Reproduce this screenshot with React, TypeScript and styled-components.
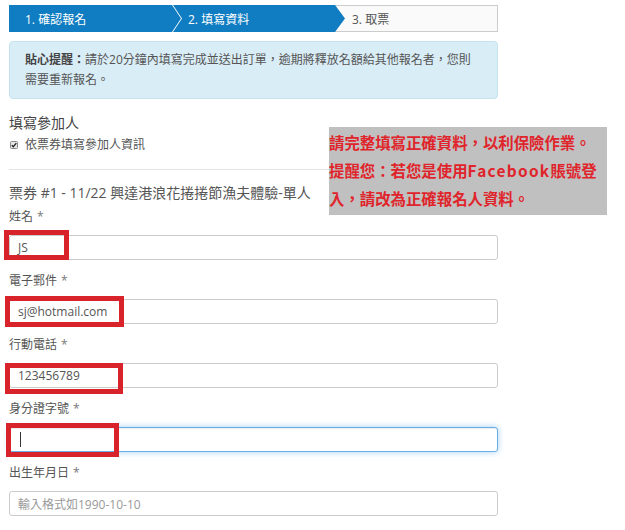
import React from "react";
import styled, { createGlobalStyle, css } from "styled-components";

const GlobalStyle = createGlobalStyle`
  html, body { margin: 0; padding: 0; background: #fff; }
  body {
    font-family: "Open Sans", "Noto Sans CJK TC", sans-serif;
    color: #555;
  }
`;

const Page = styled.div`
  position: relative;
  width: 625px;
  height: 530px;
  overflow: hidden;
  box-sizing: border-box;
  padding: 5px 0 0 9px;
`;

const Form = styled.div`
  width: 489px;
  display: flex;
  flex-direction: column;
`;

const Stepper = styled.div`
  display: flex;
  height: 27px;
`;

type StepKind = "first" | "middle" | "last";

const Step = styled.div<{ $kind: StepKind }>`
  display: flex;
  align-items: center;
  box-sizing: border-box;
  font-size: 12px;
  white-space: nowrap;
  ${({ $kind }) =>
    $kind === "first" &&
    css`
      flex: 0 0 172px;
      padding-left: 16px;
      background: #107dc2;
      color: #fff;
      clip-path: polygon(0 0, calc(100% - 9px) 0, 100% 50%, calc(100% - 9px) 100%, 0 100%);
    `}
  ${({ $kind }) =>
    $kind === "middle" &&
    css`
      flex: 0 0 172px;
      margin-left: -8px;
      padding-left: 15px;
      background: #107dc2;
      color: #fff;
      position: relative;
      z-index: 1;
      clip-path: polygon(0 0, calc(100% - 10px) 0, 100% 50%, calc(100% - 10px) 100%, 0 100%, 9px 50%);
    `}
  ${({ $kind }) =>
    $kind === "last" &&
    css`
      flex: 1;
      margin-left: -10px;
      padding-left: 17px;
      background: #fafafa;
      color: #555;
      border: 1px solid #ccc;
      border-left: none;
    `}
`;

const Alert = styled.div`
  margin-top: 9px;
  background: #d9edf7;
  border: 1px solid #c4e3ef;
  border-radius: 4px;
  padding: 8px 15px;
  font-size: 12px;
  line-height: 20px;
  color: #555;
  white-space: nowrap;
`;

const Strong = styled.strong`
  font-weight: 700;
  color: #444;
`;

const SectionHeading = styled.div`
  margin-top: 14px;
  font-size: 14px;
  line-height: 20px;
  color: #444;
`;

const CheckRow = styled.div`
  margin-top: 2px;
  display: flex;
  align-items: center;
  gap: 7px;
  padding-left: 1px;
  font-size: 12px;
  line-height: 20px;
  color: #555;
`;

const CheckIcon = styled.svg`
  width: 8px;
  height: 8px;
  flex: none;
`;

const Divider = styled.hr`
  margin: 14px 0 0;
  border: none;
  height: 1px;
  background: #e5e5e5;
`;

const TicketTitle = styled.div`
  margin-top: 12px;
  font-size: 14px;
  line-height: 22px;
  color: #555;
  white-space: nowrap;
`;

const FieldList = styled.div`
  margin-top: 3px;
  display: flex;
  flex-direction: column;
  gap: 11px;
`;

const FieldGroup = styled.div`
  display: flex;
  flex-direction: column;
`;

const Label = styled.div`
  font-size: 12px;
  line-height: 20px;
  margin-bottom: 8px;
  color: #555;
`;

const Required = styled.span`
  color: #777;
  margin-left: 4px;
`;

const InputWrap = styled.div`
  position: relative;
`;

const InputBox = styled.div<{ $focused?: boolean; $placeholder?: boolean }>`
  height: 25px;
  box-sizing: border-box;
  border: 1px solid ${({ $focused }) => ($focused ? "#66afe9" : "#ccc")};
  border-radius: 3px;
  padding: 0 8px;
  display: flex;
  align-items: center;
  font-size: 12px;
  color: ${({ $placeholder }) => ($placeholder ? "#999" : "#555")};
  background: #fff;
  ${({ $focused }) =>
    $focused &&
    css`
      box-shadow: inset 0 1px 1px rgba(0, 0, 0, 0.075), 0 0 6px rgba(102, 175, 233, 0.6);
    `}
`;

const Caret = styled.span`
  display: inline-block;
  width: 1px;
  height: 15px;
  margin-left: 2px;
  background: #333;
`;

const RedMark = styled.div<{ $x: number; $y: number; $w: number; $h: number }>`
  position: absolute;
  left: ${({ $x }) => $x}px;
  top: ${({ $y }) => $y}px;
  width: ${({ $w }) => $w}px;
  height: ${({ $h }) => $h}px;
  box-sizing: border-box;
  border: 5px solid #d8232a;
  pointer-events: none;
`;

const Note = styled.div`
  position: absolute;
  left: 329px;
  top: 127px;
  width: 278px;
  height: 88px;
  box-sizing: border-box;
  padding-top: 1px;
  background: #c0c0c0;
  color: #e0242b;
  font-family: "Noto Sans CJK TC", "Open Sans", sans-serif;
  font-weight: 700;
  font-size: 15.4px;
  line-height: 28px;
  white-space: nowrap;
`;

const NoteLatin = styled.span`
  letter-spacing: 1.3px;
`;

type Field = {
  label: string;
  value?: string;
  placeholder?: string;
  focused?: boolean;
  mark?: { x: number; y: number; w: number; h: number };
};

const fields: Field[] = [
  { label: "姓名", value: "JS", mark: { x: -5, y: -5, w: 65, h: 30 } },
  { label: "電子郵件", value: "sj@hotmail.com", mark: { x: -4, y: -3, w: 119, h: 31 } },
  { label: "行動電話", value: "123456789", mark: { x: -4, y: 0, w: 118, h: 31 } },
  { label: "身分證字號", focused: true, mark: { x: -3, y: -4, w: 113, h: 34 } },
  { label: "出生年月日", placeholder: "輸入格式如1990-10-10" },
];

export default function App() {
  return (
    <>
      <GlobalStyle />
      <Page>
        <Form>
          <Stepper>
            <Step $kind="first">1. 確認報名</Step>
            <Step $kind="middle">2. 填寫資料</Step>
            <Step $kind="last">3. 取票</Step>
          </Stepper>

          <Alert>
            <Strong>貼心提醒：</Strong>請於20分鐘內填寫完成並送出訂單，逾期將釋放名額給其他報名者，您則
            <br />
            需要重新報名。
          </Alert>

          <SectionHeading>填寫參加人</SectionHeading>
          <CheckRow>
            <CheckIcon viewBox="0 0 8 8">
              <rect x="0.5" y="0.5" width="7" height="7" rx="1" fill="#e6e6e6" stroke="#8a8a8a" />
              <path d="M1.8 4.2 L3.3 5.7 L6.3 2.2" fill="none" stroke="#222" strokeWidth="1.3" />
            </CheckIcon>
            依票券填寫參加人資訊
          </CheckRow>

          <Divider />

          <TicketTitle>票券 #1 - 11/22 興達港浪花捲捲節漁夫體驗-單人</TicketTitle>

          <FieldList>
            {fields.map((f) => (
              <FieldGroup key={f.label}>
                <Label>
                  {f.label}
                  <Required>*</Required>
                </Label>
                <InputWrap>
                  <InputBox $focused={f.focused} $placeholder={!!f.placeholder}>
                    {f.value ?? f.placeholder}
                    {f.focused && <Caret />}
                  </InputBox>
                  {f.mark && <RedMark $x={f.mark.x} $y={f.mark.y} $w={f.mark.w} $h={f.mark.h} />}
                </InputWrap>
              </FieldGroup>
            ))}
          </FieldList>
        </Form>

        <Note>
          請完整填寫正確資料，以利保險作業。
          <br />
          提醒您：若您是使用<NoteLatin>Facebook</NoteLatin>賬號登
          <br />
          入，請改為正確報名人資料。
        </Note>
      </Page>
    </>
  );
}
